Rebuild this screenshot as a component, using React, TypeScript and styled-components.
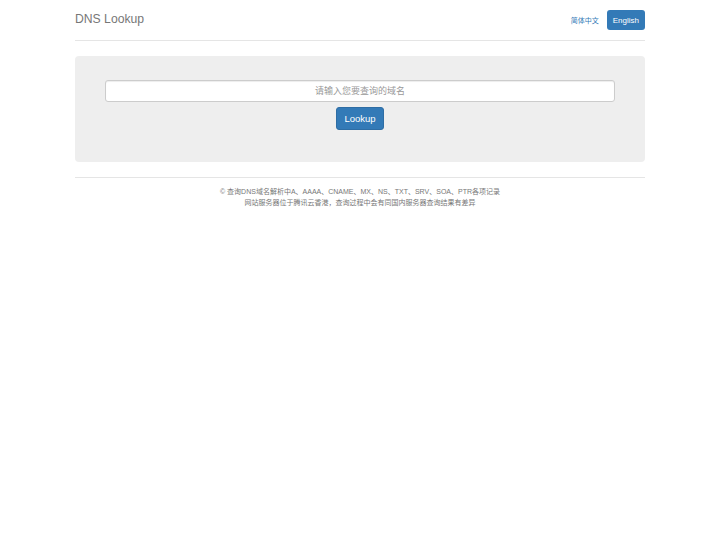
import styled, { createGlobalStyle } from 'styled-components';

const GlobalStyle = createGlobalStyle`
    html, body {
        margin: 0;
        padding: 0;
        background: #fff;
    }
    body {
        font-family: "Liberation Sans", "Noto Sans CJK SC", sans-serif;
        color: #333;
    }
    * {
        box-sizing: border-box;
    }
`;

const Container = styled.div`
    width: 570px;
    margin: 0 auto;
`;

const Header = styled.div`
    display: flex;
    align-items: center;
    justify-content: space-between;
    padding: 10px 0;
    height: 41px;
    border-bottom: 1px solid #e5e5e5;
`;

const Brand = styled.h3`
    margin: 0;
    font-size: 12.2px;
    font-weight: 400;
    color: #777;
    line-height: 1;
    margin-top: -2px;
`;

const Nav = styled.div`
    display: flex;
    align-items: center;
    gap: 8px;
`;

const NavLink = styled.a<{ $active?: boolean }>`
    display: inline-flex;
    align-items: center;
    justify-content: center;
    height: 20px;
    padding: ${p => (p.$active ? '0 6px' : '0')};
    border-radius: 3px;
    font-size: ${p => (p.$active ? '8px' : '7px')};
    text-decoration: none;
    cursor: pointer;
    color: ${p => (p.$active ? '#fff' : '#337ab7')};
    background: ${p => (p.$active ? '#337ab7' : 'transparent')};
`;

const Jumbotron = styled.div`
    margin-top: 15px;
    height: 106px;
    padding: 24px 30px 0;
    background: #eee;
    border-radius: 4px;
    display: flex;
    flex-direction: column;
    align-items: center;
`;

const SearchInput = styled.input`
    width: 100%;
    height: 22px;
    border: 1px solid #ccc;
    border-radius: 3px;
    background: #fff;
    text-align: center;
    font-family: inherit;
    font-size: 9px;
    color: #555;
    outline: none;
    box-shadow: inset 0 1px 1px rgba(0, 0, 0, 0.075);
    &::placeholder {
        color: #999;
    }
`;

const LookupButton = styled.button`
    margin-top: 5px;
    height: 23px;
    padding: 0 7px;
    border: 1px solid #2e6da4;
    border-radius: 3px;
    background: #337ab7;
    color: #fff;
    font-family: inherit;
    font-size: 9.5px;
    cursor: pointer;
`;

const Footer = styled.div`
    margin-top: 15px;
    padding-top: 9px;
    border-top: 1px solid #e5e5e5;
    text-align: center;
    font-size: 7px;
    line-height: 10.5px;
    color: #777;
`;

const App = () => {
    return (
        <>
            <GlobalStyle />
            <Container>
                <Header>
                    <Brand>DNS Lookup</Brand>
                    <Nav>
                        <NavLink>简体中文</NavLink>
                        <NavLink $active>English</NavLink>
                    </Nav>
                </Header>
                <Jumbotron>
                    <SearchInput placeholder="请输入您要查询的域名" />
                    <LookupButton>Lookup</LookupButton>
                </Jumbotron>
                <Footer>
                    <div>© 查询DNS域名解析中A、AAAA、CNAME、MX、NS、TXT、SRV、SOA、PTR各项记录</div>
                    <div>网站服务器位于腾讯云香港，查询过程中会有同国内服务器查询结果有差异</div>
                </Footer>
            </Container>
        </>
    );
};

export default App;
